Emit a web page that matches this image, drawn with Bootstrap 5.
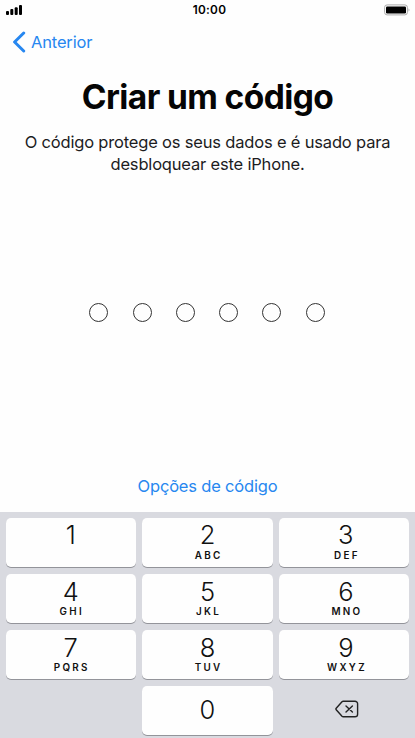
<!DOCTYPE html>
<html lang="pt">
<head>
<meta charset="utf-8">
<meta name="viewport" content="width=device-width, initial-scale=1">
<title>Criar um código</title>
<link href="https://cdn.jsdelivr.net/npm/bootstrap@5.3.0/dist/css/bootstrap.min.css" rel="stylesheet">
<style>
body{font-family:Inter,"Liberation Sans",sans-serif;background:#fefefe;color:#1c1c1e}
.screen{height:738px;max-width:415px}
.status-bar{height:22px;display:grid;grid-template-columns:1fr auto 1fr;padding:0 3px 0 6px;color:#000}
.clock{font-size:11.8px;font-weight:600;line-height:21px;letter-spacing:.25px;padding-left:1px}
.signal{margin-top:5px}
.battery{margin-top:4px}
.back-row{height:40px;padding-left:12px}
.link-blue{color:#2787f0;text-decoration:none;font-size:16.5px;line-height:22px;white-space:nowrap}
.back-text{letter-spacing:-.16px;padding-left:5px}
.options{letter-spacing:-.18px;padding-bottom:14.5px}
.heading{font-size:33.5px;font-weight:680;line-height:40px;letter-spacing:-.6px;color:#050505;margin-top:15px;white-space:nowrap}
.intro{font-size:16.5px;line-height:22px;letter-spacing:-.18px;margin-top:14px;white-space:nowrap}
.dots{margin-top:128px;gap:24.3px;padding-right:1px}
.dot{width:19px;height:19px;border:1.3px solid #333;border-radius:50%}
.keypad{height:226.5px;background:#d9dae0;padding:6px 6px 0;display:grid;grid-template-columns:repeat(3,1fr);grid-auto-rows:49.2px;gap:7px 6px}
.key{background:#fefefe;border:0;border-radius:5px;box-shadow:0 1px 0 #93949a;padding:3px 0 0;color:#111}
.key:nth-child(-n+3){padding-top:2.5px}
.key:nth-child(3n+1){padding-right:1px}
.key:nth-child(3n){padding-left:4px}
.key-plain{background:transparent;box-shadow:none}
.digit{font-size:25.5px;font-weight:350;line-height:30px}
.letters{font-size:9.9px;font-weight:600;line-height:11px;letter-spacing:2.3px;margin-right:-2.3px;height:11px;margin-top:-.5px}
.key-center{padding:0 0 1px}
.key-plain.key-center{padding:0 0 3px 6px}
</style>
</head>
<body>
<main class="screen mx-auto d-flex flex-column overflow-hidden">
  <header class="status-bar">
    <svg class="signal" width="17" height="11" viewBox="0 0 17 11"><rect y="6" width="3" height="4" rx="1"/><rect x="4.3" y="4" width="3" height="6" rx="1"/><rect x="8.7" y="2.3" width="3" height="7.7" rx="1"/><rect x="13" width="3" height="10" rx="1"/></svg>
    <span class="clock">10:00</span>
    <svg class="battery ms-auto" width="28" height="12" viewBox="0 0 28 12"><rect x=".6" y=".9" width="22.8" height="10" rx="2.5" fill="#fff" stroke="#aaa"/><rect x="2" y="2.4" width="20" height="7" rx="1.2"/><path d="M24.6 4.2q1.8 1.7 0 3.6z" fill="#999"/></svg>
  </header>
  <nav class="back-row d-flex align-items-center">
    <a href="#" class="link-blue d-flex align-items-center">
      <svg width="14" height="22" viewBox="0 0 14 22" fill="none" stroke="currentColor" stroke-width="3" stroke-linecap="round" stroke-linejoin="round"><path d="M11.7 2 2.6 11l9.1 9"/></svg>
      <span class="back-text">Anterior</span>
    </a>
  </nav>
  <h1 class="heading text-center mb-0">Criar um código</h1>
  <p class="intro text-center mb-0">O código protege os seus dados e é usado para<br>desbloquear este iPhone.</p>
  <div class="dots d-flex justify-content-center">
    <span class="dot"></span><span class="dot"></span><span class="dot"></span><span class="dot"></span><span class="dot"></span><span class="dot"></span>
  </div>
  <div class="options mt-auto text-center"><a href="#" class="link-blue d-block">Opções de código</a></div>
  <section class="keypad flex-shrink-0">
    <button class="key d-flex flex-column align-items-center"><span class="digit">1</span></button>
    <button class="key d-flex flex-column align-items-center"><span class="digit">2</span><span class="letters">ABC</span></button>
    <button class="key d-flex flex-column align-items-center"><span class="digit">3</span><span class="letters">DEF</span></button>
    <button class="key d-flex flex-column align-items-center"><span class="digit">4</span><span class="letters">GHI</span></button>
    <button class="key d-flex flex-column align-items-center"><span class="digit">5</span><span class="letters">JKL</span></button>
    <button class="key d-flex flex-column align-items-center"><span class="digit">6</span><span class="letters">MNO</span></button>
    <button class="key d-flex flex-column align-items-center"><span class="digit">7</span><span class="letters">PQRS</span></button>
    <button class="key d-flex flex-column align-items-center"><span class="digit">8</span><span class="letters">TUV</span></button>
    <button class="key d-flex flex-column align-items-center"><span class="digit">9</span><span class="letters">WXYZ</span></button>
    <span></span>
    <button class="key key-center d-flex align-items-center justify-content-center"><span class="digit">0</span></button>
    <button class="key key-plain key-center d-flex align-items-center justify-content-center" aria-label="Apagar">
      <svg width="24" height="18" viewBox="0 0 24 18" fill="none" stroke="#222" stroke-width="1.4" stroke-linecap="round" stroke-linejoin="round"><path d="M8.2 1.2H20a2.6 2.6 0 0 1 2.6 2.6v10.4a2.6 2.6 0 0 1-2.6 2.6H8.2q-.7 0-1.2-.5L1.2 9.7q-.6-.7 0-1.4L7 1.7q.5-.5 1.2-.5z"/><path d="m11 6 6.4 6m0-6L11 12"/></svg>
    </button>
  </section>
</main>
<script src="https://cdn.jsdelivr.net/npm/bootstrap@5.3.0/dist/js/bootstrap.bundle.min.js"></script>
</body>
</html>
